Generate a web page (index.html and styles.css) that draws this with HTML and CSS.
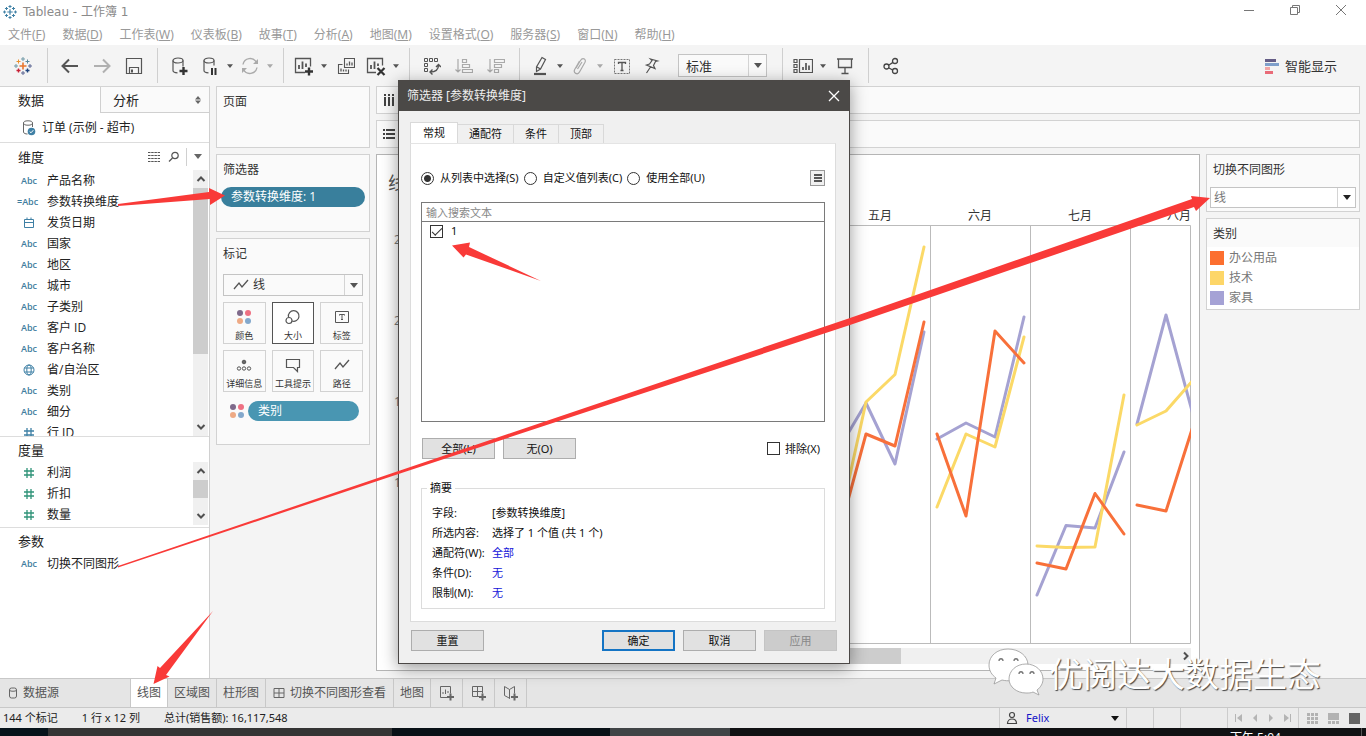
FILE: index.html
```html
<!DOCTYPE html>
<html lang="zh-CN">
<head>
<meta charset="utf-8">
<title>Tableau - 工作簿 1</title>
<link rel="stylesheet" href="styles.css">
</head>
<body>
<svg class="defs" aria-hidden="true">
  <defs>
    <symbol id="caret" viewBox="0 0 8 5"><path d="M0 0h8L4 5z" fill="currentColor"/></symbol>
    <symbol id="hash" viewBox="0 0 12 12"><path d="M4 1v10M8 1v10M1 4h10M1 8h10" stroke="currentColor" stroke-width="1.300" fill="none"/></symbol>
    <symbol id="chev-up" viewBox="0 0 10 8"><path d="M1.500 6 5 2.500 8.500 6" stroke="#505050" stroke-width="2" fill="none"/></symbol>
    <symbol id="chev-down" viewBox="0 0 10 8"><path d="M1.500 2 5 5.500 8.500 2" stroke="#505050" stroke-width="2" fill="none"/></symbol>
    <symbol id="dots" viewBox="0 0 16 16"><circle cx="4" cy="4" r="3" fill="#7f6a8b"/><circle cx="12" cy="4" r="3" fill="#ee7183"/><circle cx="4" cy="12" r="3" fill="#eeaa85"/><circle cx="12" cy="12" r="3" fill="#83a8cc"/></symbol>
    <symbol id="wave" viewBox="0 0 16 12"><path d="M1 10 6 4l3 4 6-7" stroke="#555" stroke-width="1.300" fill="none"/></symbol>
    <symbol id="logo" viewBox="0 0 18 18">
      <path d="M9 5.500v7M5.500 9h7" stroke-width="1.600"/>
      <path d="M9 0v4M7 2h4M9 14v4M7 16h4M2 7v4M0 9h4M16 7v4M14 9h4M4.500 2.500v4M2.500 4.500h4M13.500 2.500v4M11.500 4.500h4M4.500 11.500v4M2.500 13.500h4M13.500 11.500v4M11.500 13.500h4"/>
    </symbol>
  </defs>
</svg>

<header class="titlebar">
  <svg class="app-icon" viewBox="0 0 18 18" stroke="#3f80a5" stroke-width="1.300" fill="none"><use href="#logo"/></svg>
  <h1>Tableau - 工作簿 1</h1>
  <div class="window-buttons">
    <button aria-label="最小化"><svg width="12" height="12"><path d="M1 6.500h10" stroke="#777"/></svg></button>
    <button aria-label="还原"><svg width="12" height="12" fill="none" stroke="#777"><path d="M1.500 3.500h7v7h-7zM3.500 3.500v-2h7v7h-2"/></svg></button>
    <button aria-label="关闭"><svg width="12" height="12"><path d="m1 1 10 10M11 1 1 11" stroke="#777"/></svg></button>
  </div>
</header>

<nav class="menubar">
  <button>文件(<u>F</u>)</button><button>数据(<u>D</u>)</button><button>工作表(<u>W</u>)</button><button>仪表板(<u>B</u>)</button><button>故事(<u>T</u>)</button><button>分析(<u>A</u>)</button><button>地图(<u>M</u>)</button><button>设置格式(<u>O</u>)</button><button>服务器(<u>S</u>)</button><button>窗口(<u>N</u>)</button><button>帮助(<u>H</u>)</button>
</nav>

<div class="toolbar">
  <button class="tool home" aria-label="开始"><svg width="18" height="18" viewBox="0 0 18 18" fill="none"><path d="M9 5.500v7M5.500 9h7" stroke="#e8762d" stroke-width="1.600"/><path d="M9 0v4M7 2h4" stroke="#7199a6"/><path d="M9 14v4M7 16h4" stroke="#5b6591"/><path d="M2 7v4M0 9h4" stroke="#7199a6"/><path d="M16 7v4M14 9h4" stroke="#5b6591"/><path d="M4.500 2.500v4M2.500 4.500h4" stroke="#eb912c"/><path d="M13.500 2.500v4M11.500 4.500h4" stroke="#59879b"/><path d="M4.500 11.500v4M2.500 13.500h4" stroke="#c72035" stroke-width="1.400"/><path d="M13.500 11.500v4M11.500 13.500h4" stroke="#1f447e" stroke-width="1.400"/></svg></button>
  <span class="sep"></span>
  <button class="tool" aria-label="撤消"><svg width="18" height="16" fill="none" stroke="#555" stroke-width="2"><path d="M17 8H2M8 1.500 1.500 8 8 14.500"/></svg></button>
  <button class="tool" aria-label="重做"><svg width="18" height="16" fill="none" stroke="#b0b0b0" stroke-width="2"><path d="M1 8h15M10 1.500 16.500 8 10 14.500"/></svg></button>
  <button class="tool" aria-label="保存"><svg width="18" height="18" fill="none" stroke="#555"><path d="M1.500 1.500h15v15h-15zM4.500 16.500v-6h9v6" stroke-width="1.200"/><path d="M7 12.500v3" stroke-width="2"/></svg></button>
  <span class="sep"></span>
  <button class="tool" aria-label="新建数据源"><svg width="18" height="20" fill="none" stroke="#555" stroke-width="1.200"><ellipse cx="7" cy="4.500" rx="5" ry="2.500"/><path d="M2 4.500v10c0 1.300 2 2.200 4.500 2.300M12 4.500v6"/><path d="M12.500 11v8M8.500 15h8" stroke="#333" stroke-width="2.400"/></svg></button>
  <button class="tool narrow" aria-label="暂停自动更新"><svg width="18" height="20" fill="none" stroke="#555" stroke-width="1.200"><ellipse cx="8" cy="4.500" rx="5" ry="2.500"/><path d="M3 4.500v10c0 1.300 2 2.200 4.500 2.300M13 4.500v5"/><path d="M11 12v7M14.500 12v7" stroke="#333" stroke-width="2"/></svg></button>
  <button class="drop" aria-label="更新选项"><svg><use href="#caret"/></svg></button>
  <button class="tool narrow" aria-label="运行更新"><svg width="18" height="18" fill="none" stroke="#aaa" stroke-width="1.400"><path d="M2 7.500a7.200 7.200 0 0 1 13.500-2M16 10.500a7.200 7.200 0 0 1-13.500 2"/><path d="M17 2v5h-5zM1 16v-5h5z" fill="#aaa" stroke="none"/></svg></button>
  <button class="drop off" aria-label="运行选项"><svg><use href="#caret"/></svg></button>
  <span class="sep"></span>
  <button class="tool narrow" aria-label="新建工作表"><svg width="20" height="20" fill="none" stroke="#555" stroke-width="1.300"><path d="M11 16.500H1.500v-14h15v8"/><path d="M5 13V9M8.500 13V5.500M12 11V7.500" stroke-width="1.800"/><path d="M15 11.500v8M11 15.500h8" stroke="#333" stroke-width="2.400"/></svg></button>
  <button class="drop" aria-label="新建选项"><svg><use href="#caret"/></svg></button>
  <button class="tool" aria-label="复制"><svg width="18" height="18" fill="none" stroke="#555" stroke-width="1.100"><path d="M7.500 1.500h10v9h-10zM5.500 7.500h-4v9h10v-4"/><path d="M10 8.500v-2M12.500 8.500v-4M15 8.500v-3M4 14.500v-3M6.500 14.500v-2M9 14.500v-2" stroke-width="1.300"/></svg></button>
  <button class="tool narrow" aria-label="清除工作表"><svg width="20" height="20" fill="none" stroke="#555" stroke-width="1.300"><path d="M10 16.500H1.500v-14h15v7"/><path d="M5 13V9M8.500 13V5.500M12 10V7.500" stroke-width="1.800"/><path d="m11.500 12 7 7M18.500 12l-7 7" stroke="#333" stroke-width="2.200"/></svg></button>
  <button class="drop" aria-label="清除选项"><svg><use href="#caret"/></svg></button>
  <span class="sep"></span>
  <button class="tool" aria-label="交换行和列"><svg width="18" height="18" fill="none" stroke="#555"><path d="M1.500 1.500h3v3h-3zM6.500 1.500h3v3h-3zM11.500 1.500h3v3h-3zM1.500 6.500h3v3h-3zM1.500 11.500h3v3h-3z"/><path d="M15.500 8c0 5-3 7-8.500 7M13 10l2.500-2.500L18 10M9.500 12.500 7 15l2.500 2.500" stroke-width="1.400"/></svg></button>
  <button class="tool" aria-label="升序排序"><svg width="18" height="16" fill="none" stroke="#aaa" stroke-width="1.200"><path d="M3 1v13M.500 11.500 3 14l2.500-2.500M7.500 1.500h4v3h-4zM7.500 6.500h7v3h-7zM7.500 11.500h10v3h-10z"/></svg></button>
  <button class="tool" aria-label="降序排序"><svg width="18" height="16" fill="none" stroke="#aaa" stroke-width="1.200"><path d="M3 1v13M.500 11.500 3 14l2.500-2.500M7.500 1.500h10v3h-10zM7.500 6.500h7v3h-7zM7.500 11.500h4v3h-4z"/></svg></button>
  <span class="sep"></span>
  <button class="tool narrow" aria-label="突出显示"><svg width="16" height="20" fill="none" stroke="#555" stroke-width="1.200"><path d="m10 1.500 3.500 2-5 9.500-4 2.500V11zM5 11l3.500 2"/><path d="M2 18h12" stroke-width="2.200"/></svg></button>
  <button class="drop" aria-label="突出选项"><svg><use href="#caret"/></svg></button>
  <button class="tool narrow" aria-label="组成员"><svg width="16" height="18" fill="none" stroke="#aaa" stroke-width="1.200"><path d="M4 11 8.500 3.500c2-3.500 6-1.500 4.500 1.800L7.500 15c-2 3.500-6.500 1-4.800-2.500L7.500 4M5.500 12 10 5"/></svg></button>
  <button class="drop off" aria-label="组选项"><svg><use href="#caret"/></svg></button>
  <button class="tool" aria-label="显示标记标签"><svg width="18" height="18"><path d="M1.500 2.500h15v14h-15z" fill="none" stroke="#777" stroke-dasharray="2 1"/><path d="M5.500 7V5.500h7V7M9 5.500v8M7.500 13.500h3" fill="none" stroke="#555" stroke-width="1.300"/></svg></button>
  <button class="tool narrow" aria-label="固定轴"><svg width="16" height="18" fill="none" stroke="#555" stroke-width="1.200"><path d="m6.500 2 7 2-2 .5-2 4 1.500 3L2.500 8l3-1L8 3.500zM6.500 10l-4 6"/></svg></button>
  <span class="combo fit"><select aria-label="适合"><option>标准</option></select><i><svg><use href="#caret"/></svg></i></span>
  <span class="sep"></span>
  <button class="tool narrow" aria-label="显示隐藏卡"><svg width="20" height="16" fill="none" stroke="#555" stroke-width="1.200"><path d="M1 1.500h3v3H1zM1 6.500h3v3H1zM1 11.500h3v3H1zM6.500 1.500h13v13h-13z"/><path d="M10 12V9M13 12V5M16 12V7.500" stroke-width="1.700"/></svg></button>
  <button class="drop" aria-label="卡选项"><svg><use href="#caret"/></svg></button>
  <button class="tool" aria-label="演示模式"><svg width="18" height="18" fill="none" stroke="#555" stroke-width="1.300"><path d="M1 2h16M2.500 2v8.500h13V2M9 10.500V16M5.500 16.500h7"/></svg></button>
  <span class="sep"></span>
  <button class="tool" aria-label="共享"><svg width="16" height="18" fill="none" stroke="#444" stroke-width="1.300"><circle cx="3.500" cy="9.500" r="2.500"/><circle cx="12" cy="4" r="2.500"/><circle cx="12" cy="14" r="2.500"/><path d="m6 8 4-2.600M6 11l3.600 2"/></svg></button>
  <button class="show-me"><svg width="16" height="16"><path d="M1 1h11v3H1z" fill="#655d86"/><path d="M1 5h14v3H1z" fill="#7f9fca"/><path d="M1 9h5v3H1z" fill="#f1a5a5"/><path d="M1 13h8v3H1z" fill="#e96b78"/></svg>智能显示</button>
</div>

<main class="workspace">
  <aside class="data-pane">
    <div class="pane-tabs"><button class="on">数据</button><button>分析<svg width="6" height="8"><path d="M0 3.500h6L3 0zM0 4.500h6L3 8z" fill="#666"/></svg></button></div>
    <button class="source"><svg width="14" height="16" fill="none" stroke="#666"><ellipse cx="6" cy="3" rx="4.500" ry="2.200"/><path d="M1.500 3v9c0 1.400 2 2 4 2M10.500 3v4"/><circle cx="9.500" cy="11.500" r="3.800" fill="#3f80a5" stroke="none"/><path d="m7.700 11.500 1.300 1.300 2.300-2.600" stroke="#fff"/></svg>订单 (示例 - 超市)</button>
    <section class="dims">
      <div class="pane-head"><h2>维度</h2>
        <button aria-label="查看数据"><svg width="12" height="11"><path d="M0 1.500h12M0 4.500h12M0 7.500h12M0 10.500h12" stroke="#555" stroke-dasharray="2.500 .700"/></svg></button>
        <button aria-label="查找"><svg width="12" height="12" fill="none" stroke="#555" stroke-width="1.200"><circle cx="7" cy="4.500" r="3.200"/><path d="M4.500 7 1 10.500"/></svg></button>
        <button class="more" aria-label="更多"><svg width="8" height="5" color="#666"><use href="#caret"/></svg></button>
      </div>
      <div class="list-wrap">
        <ul class="fields">
          <li><b>Abc</b>产品名称</li><li><b class="calc">=Abc</b>参数转换维度</li>
          <li><svg viewBox="0 0 12 12" fill="none" stroke="#3f80a5"><path d="M1.500 2.500h9v8h-9zM1.500 5.500h9M4 .500v2M8 .500v2"/></svg>发货日期</li>
          <li><b>Abc</b>国家</li><li><b>Abc</b>地区</li><li><b>Abc</b>城市</li><li><b>Abc</b>子类别</li><li><b>Abc</b>客户 ID</li><li><b>Abc</b>客户名称</li>
          <li><svg viewBox="0 0 12 12" fill="none" stroke="#3f80a5"><circle cx="6" cy="6" r="5"/><ellipse cx="6" cy="6" rx="2.200" ry="5"/><path d="M1.500 4h9M1.500 8h9"/></svg>省/自治区</li>
          <li><b>Abc</b>类别</li><li><b>Abc</b>细分</li><li><svg class="blue"><use href="#hash"/></svg>行 ID</li>
        </ul>
        <div class="scroll"><svg><use href="#chev-up"/></svg><span class="thumb long"></span><svg><use href="#chev-down"/></svg></div>
      </div>
    </section>
    <section class="measures">
      <div class="pane-head"><h2>度量</h2></div>
      <div class="list-wrap">
        <ul class="fields"><li><svg class="green"><use href="#hash"/></svg>利润</li><li><svg class="green"><use href="#hash"/></svg>折扣</li><li><svg class="green"><use href="#hash"/></svg>数量</li></ul>
        <div class="scroll"><svg><use href="#chev-up"/></svg><span class="thumb short"></span><svg><use href="#chev-down"/></svg></div>
      </div>
    </section>
    <section class="params">
      <div class="pane-head"><h2>参数</h2></div>
      <ul class="fields"><li><b>Abc</b>切换不同图形</li></ul>
    </section>
  </aside>

  <div class="shelves">
    <section class="card pages"><h3>页面</h3></section>
    <section class="card filters"><h3>筛选器</h3><button class="pill dark">参数转换维度: 1</button></section>
    <section class="card marks"><h3>标记</h3>
      <span class="combo mark-type"><svg class="lead"><use href="#wave"/></svg><select aria-label="标记类型"><option>线</option></select><i><svg><use href="#caret"/></svg></i></span>
      <div class="mark-grid">
        <button><svg><use href="#dots"/></svg>颜色</button>
        <button class="on"><svg viewBox="0 0 16 16" fill="none" stroke="#555" stroke-width="1.200"><path d="M7 12a5.300 5.300 0 1 0-3.500-4"/><circle cx="4" cy="11.500" r="3"/></svg>大小</button>
        <button><svg viewBox="0 0 16 16" fill="none" stroke="#555"><path d="M1.500 2.500h13v11h-13z"/><path d="M5.500 6.500v-1h5v1M8 5.500v5M7 10.500h2"/></svg>标签</button>
        <button><svg viewBox="0 0 16 16" fill="none" stroke="#555"><circle cx="8" cy="5" r="1.800" fill="#666"/><circle cx="3" cy="11.500" r="1.700"/><circle cx="8" cy="11.500" r="1.700"/><circle cx="13" cy="11.500" r="1.700"/></svg>详细信息</button>
        <button><svg viewBox="0 0 16 16" fill="none" stroke="#555" stroke-width="1.200"><path d="M1.500 2.500h13v8h-2v4l-4-4h-7z"/></svg>工具提示</button>
        <button><svg viewBox="0 -2 16 16"><use href="#wave" width="16" height="12"/></svg>路径</button>
      </div>
      <div class="mark-row"><svg><use href="#dots"/></svg><button class="pill">类别</button></div>
    </section>
  </div>

  <div class="view">
    <div class="shelf"><svg width="14" height="14"><path d="M3 4v9M7 4v9M11 4v9M3 1v2M7 1v2M11 1v2" stroke="#444" stroke-width="2"/></svg></div>
    <div class="shelf"><svg width="14" height="14"><path d="M4 3h9M4 7h9M4 11h9M1 3h2M1 7h2M1 11h2" stroke="#444" stroke-width="2"/></svg></div>
    <div class="view-main">
      <section class="canvas">
        <h2>线图</h2>
        <div class="chart">
          <div class="axis"><span>2</span><span>2</span><span>1</span><span>1</span></div>
          <svg class="plot" viewBox="430 200 761 444" preserveAspectRatio="xMaxYMin slice">
            <g class="months"><text x="880" y="220">五月</text><text x="980" y="220">六月</text><text x="1080" y="220">七月</text><text x="1179" y="220">八月</text></g>
            <path class="grid" d="M430 225.500h760.500v418H430M830.500 225v418M930.500 225v418M1030.500 225v418M1130.500 225v418"/>
            <g class="purple"><path d="m837 452 29-49 29 61 29-132"/><path d="m937 439 29-16 29 14 29-120"/><path d="m1037 595 29-69.500 29 2.500 29-76"/><path d="m1137 424 29-109 29 107"/></g>
            <g class="yellow"><path d="m837 534 29-132 29-27.500L924 247"/><path d="m937 507 29-73 29 13 29-110"/><path d="m1037 546 29 1.500 29-.5 29-152"/><path d="m1137 425 29-14 29-33"/></g>
            <g class="orange"><path d="m837 541 29-107 29 12 29-124"/><path d="m937 434 29 82 29-185 29 32"/><path d="m1037 563 29 6 29-75.500 29 40.500"/><path d="m1137 505 29 6 29-91"/></g>
          </svg>
        </div>
        <div class="hscroll"><span></span><svg width="8" height="10"><path d="M2 1.500 5.500 5 2 8.500" fill="none" stroke="#505050" stroke-width="2"/></svg></div>
      </section>
      <aside class="legends">
        <section class="card param-card"><h3><label for="shape">切换不同图形</label></h3><span class="combo shape"><select id="shape"><option>线</option></select><i><svg><use href="#caret"/></svg></i></span></section>
        <section class="card legend"><h3>类别</h3><ul><li class="c1">办公用品</li><li class="c2">技术</li><li class="c3">家具</li></ul></section>
      </aside>
    </div>
  </div>
</main>

<nav class="sheet-tabs">
  <button class="ds"><svg width="10" height="12" fill="none" stroke="#666"><rect x="1.500" y="1" width="7" height="10" rx="2"/><path d="M1.500 3.500c1.500 1 5.500 1 7 0"/></svg>数据源</button>
  <button class="on">线图</button><button>区域图</button><button>柱形图</button>
  <button class="board"><svg width="12" height="12" fill="none" stroke="#666"><path d="M1 1.500h10v9H1zM6 1.500v9M1 6h10"/></svg>切换不同图形查看</button><button>地图</button>
  <button class="new" aria-label="新建工作表"><svg width="16" height="16" fill="none" stroke="#666"><path d="M8 12.500H1.500v-11h10v7M4 9V7M6.500 9V4.500M9 8V6"/><path d="M11.500 8.500v7M8 12h7" stroke-width="2"/></svg></button>
  <button class="new" aria-label="新建仪表板"><svg width="16" height="16" fill="none" stroke="#666"><path d="M8 11.500H1.500v-10h10v7M6.500 1.500v10M1.500 6.500h10"/><path d="M11.500 8.500v7M8 12h7" stroke-width="2"/></svg></button>
  <button class="new" aria-label="新建故事"><svg width="16" height="16" fill="none" stroke="#666"><path d="M7 13.500 1.500 10.500v-9l5 3 5-3v7M6.500 4.500v9"/><path d="M11.500 8.500v7M8 12h7" stroke-width="2"/></svg></button>
</nav>

<footer class="status">
  <p><span>144 个标记</span><span>1 行 x 12 列</span><span>总计(销售额): 16,117,548</span></p>
  <button class="user"><svg width="12" height="14" fill="none" stroke="#444" stroke-width="1.200"><circle cx="6" cy="4" r="2.500"/><path d="M1.500 12.500c0-6 9-6 9 0z"/></svg><span>Felix</span><svg width="8" height="5"><use href="#caret"/></svg></button>
  <i class="slot"></i><i class="slot"></i><i class="slot wide"></i>
  <div class="pager">
    <button aria-label="第一个"><svg width="8" height="8" fill="#b4b4b4"><path d="M0 0h1v8H0zM7 0v8L2 4z"/></svg></button><button aria-label="上一个"><svg width="8" height="8" fill="#b4b4b4"><path d="M6 0v8L2 4z"/></svg></button><button aria-label="下一个"><svg width="8" height="8" fill="#b4b4b4"><path d="M2 0v8l4-4z"/></svg></button><button aria-label="最后一个"><svg width="8" height="8" fill="#b4b4b4"><path d="M7 0h1v8H7zM1 0v8l5-4z"/></svg></button>
  </div>
  <div class="modes">
    <button aria-label="缩略图"><svg width="11" height="11" fill="#b2b2b2"><path d="M0 0h3v3H0zM4 0h3v3H4zM8 0h3v3H8zM0 4h3v3H0zM4 4h3v3H4zM8 4h3v3H8zM0 8h3v3H0zM4 8h3v3H4zM8 8h3v3H8z"/></svg></button>
    <button aria-label="胶片"><svg width="11" height="11" fill="#b2b2b2"><path d="M0 0h11v7H0zM0 8h3v3H0zM4 8h3v3H4zM8 8h3v3H8z"/></svg></button>
    <button aria-label="工作表"><svg width="11" height="11" fill="#646464"><path d="M0 0h11v11H0z"/></svg></button>
  </div>
</footer>

<div class="taskbar"><span class="t1"></span><span class="t2"></span><span class="t3"></span><span class="t4"></span><time>下午 5:04</time></div>

<div class="dialog" role="dialog" aria-label="筛选器">
  <header><h2>筛选器 [参数转换维度]</h2><button aria-label="关闭"><svg width="12" height="12"><path d="m1 1 10 10M11 1 1 11" stroke="#fff" stroke-width="1.300"/></svg></button></header>
  <div class="dialog-body">
    <div class="dtabs"><button class="on">常规</button><button>通配符</button><button>条件</button><button>顶部</button></div>
    <div class="dpage">
      <div class="radios">
        <label><input type="radio" name="mode" checked>从列表中选择(S)</label><label><input type="radio" name="mode">自定义值列表(C)</label><label><input type="radio" name="mode">使用全部(U)</label>
        <button class="burger" aria-label="选项"><svg width="8" height="8"><path d="M0 1h8M0 4h8M0 7h8" stroke="#555" stroke-width="2"/></svg></button>
      </div>
      <input class="search" type="text" placeholder="输入搜索文本" aria-label="搜索">
      <div class="values"><label><input type="checkbox" checked>1</label></div>
      <div class="list-actions"><button class="btn">全部(L)</button><button class="btn">无(O)</button><label><input type="checkbox">排除(X)</label></div>
      <fieldset><legend>摘要</legend>
        <dl><dt>字段:</dt><dd>[参数转换维度]</dd><dt>所选内容:</dt><dd>选择了 1 个值 (共 1 个)</dd><dt>通配符(W):</dt><dd><a href="#">全部</a></dd><dt>条件(D):</dt><dd><a href="#">无</a></dd><dt>限制(M):</dt><dd><a href="#">无</a></dd></dl>
      </fieldset>
    </div>
    <div class="dfoot"><button class="btn">重置</button><button class="btn primary">确定</button><button class="btn">取消</button><button class="btn" disabled>应用</button></div>
  </div>
</div>

<svg class="arrows" aria-hidden="true">
  <path d="m118 204 91-12v-4l16 7.500-15 9.500v-6l-92 7z"/>
  <path d="m118 566 282-95.500L850 318l342-119-1-3 19 2-14 13-2-4L850 325 400 473.500 118 567.500z"/>
  <path d="m452 245.500 18-3-1 4.500 72 34-75-26.500-2.500 3z"/>
  <path d="m153.500 684 4-18 2.500 2 53-57-47 64 3.500 1.500z"/>
</svg>

<div class="watermark">
  <svg width="56" height="50" viewBox="0 0 56 50"><g fill="#fff" stroke="#999" stroke-width=".800"><path d="M20 1C9 1 1 8 1 17c0 6 3 10 7 13l-2 6 8-4c12 3 26-3 26-15C40 8 31 1 20 1z"/><path d="M38 16c-10 0-17 7-17 15s8 14 17 14c3 0 5 0 7-1l6 3-2-5c4-3 6-7 6-11 0-8-7-15-17-15z"/></g><g fill="none" stroke="#777" stroke-width="1.300"><path d="M11 13c0-3 4-3 4 0M26 13c0-3 4-3 4 0M31 26c0-3 4-3 4 0M42 26c0-3 4-3 4 0"/></g></svg>
  <span>优阅达大数据生态</span>
</div>
</body>
</html>
```
FILE: styles.css
```css
* { box-sizing: border-box; }
body { margin: 0; height: 100vh; position: relative; overflow: hidden; display: flex; flex-direction: column; background: #f4f4f4; color: #333; font: 12px/16px "Open Sans", "Noto Sans CJK SC", sans-serif; }
button, input, select { font: inherit; color: inherit; margin: 0; }
button { border: 0; background: none; padding: 0; display: flex; align-items: center; justify-content: center; white-space: nowrap; }
h1, h2, h3, p, ul, dl, dd { margin: 0; padding: 0; font-weight: 400; }
ul { list-style: none; }
svg { flex: none; }
.defs { position: absolute; width: 0; height: 0; }

.titlebar { flex: none; height: 24px; display: flex; align-items: center; background: #fff; color: #8a8a8a; padding-left: 3px; }
.titlebar h1 { flex: 1; font: 12px/20px "DejaVu Sans", "Noto Sans CJK SC", sans-serif; }
.app-icon { width: 14px; height: 14px; margin-right: 6px; }
.window-buttons { display: flex; align-self: flex-start; padding-right: 2px; }
.window-buttons button { width: 46px; height: 20px; }

.menubar { flex: none; height: 21px; display: flex; gap: 17px; padding-left: 8px; background: #fff; color: #999; font-family: "Noto Sans", "Noto Sans CJK SC", sans-serif; }

.toolbar { flex: none; height: 41px; display: flex; align-items: center; }
.tool { width: 32px; height: 30px; }
.tool.narrow { width: 28px; }
.tool.home { width: 34px; margin-left: 6px; }
.drop { width: 12px; height: 30px; color: #555; }
.drop svg { width: 6px; height: 4px; }
.drop.off { color: #aaa; }
.sep { width: 1px; height: 35px; margin: 0 6px 0 7px; background: #cfcfcf; }
.show-me { margin-left: auto; margin-right: 29px; gap: 5px; font-size: 13px; }

.combo { position: relative; display: flex; border: 1px solid #c4c4c4; background: #fafafa; }
.combo select { appearance: none; border: 0; background: none; width: 100%; padding: 0 4px; outline: 0; }
.combo i { position: absolute; right: 0; top: 0; bottom: 0; width: 18px; border-left: 1px solid #d4d4d4; display: flex; align-items: center; justify-content: center; pointer-events: none; color: #555; }
.combo i svg { width: 8px; height: 5px; }
.combo.fit { width: 89px; height: 23px; margin: 0 8px 0 12px; font-size: 13px; }
.combo.fit select { padding-left: 7px; }

.workspace { flex: 1; min-height: 0; display: flex; gap: 6px; padding-right: 6px; }
.data-pane { width: 210px; flex: none; background: #fff; border-right: 1px solid #d0d0d0; color: #222; }
.pane-tabs { display: flex; height: 27px; font-size: 13px; border-top: 1px solid #d4d4d4; }
.pane-tabs button { width: 100px; justify-content: flex-start; padding-left: 18px; }
.pane-tabs button + button { flex: 1; justify-content: space-between; padding: 0 8px 0 12px; background: #fafafa; border-left: 1px solid #d0d0d0; border-bottom: 1px solid #d0d0d0; }
.source { width: 100%; height: 30px; padding-left: 22px; gap: 6px; justify-content: flex-start; border-bottom: 1px solid #ddd; }
.pane-head { display: flex; align-items: center; height: 27px; padding-left: 18px; }
.pane-head h2 { font-size: 13px; flex: 1; }
.pane-head button { width: 20px; height: 18px; }
.pane-head .more { border-left: 1px solid #d0d0d0; width: 23px; margin-left: 2px; }
.dims { border-bottom: 1px solid #ddd; }
.measures { border-bottom: 1px solid #ddd; padding-bottom: 2px; }
.measures .pane-head { height: 25px; }
.list-wrap { display: flex; padding-right: 1px; }
.dims .list-wrap { height: 266px; }
.fields { flex: 1; overflow: hidden; }
.fields li { display: flex; align-items: center; height: 21px; padding-left: 18px; }
.fields b { width: 29px; padding-left: 3px; flex: none; color: #3f7d9e; font: 600 9px/12px "Open Sans", sans-serif; }
.fields b.calc { padding-left: 0; margin-left: -1px; width: 30px; }
.fields li svg { width: 12px; height: 12px; margin: 0 12px 0 5px; }
.fields .blue { color: #3f80a5; }
.fields .green { color: #2f9378; }
.scroll { width: 15px; background: #f0f0f0; display: flex; flex-direction: column; align-items: center; }
.scroll svg { width: 10px; height: 8px; margin: 5px 0; }
.thumb { width: 15px; background: #cdcdcd; margin-bottom: auto; }
.thumb.long { height: 166px; }
.thumb.short { height: 18px; }
.params .pane-head { height: 25px; }

.shelves { width: 154px; flex: none; display: flex; flex-direction: column; gap: 6px; }
.card { border: 1px solid #d2d2d2; background: #fafafa; }
.card h3 { font-size: 12px; height: 28px; line-height: 30px; padding-left: 6px; }
.pages { height: 62px; }
.filters { height: 78px; padding: 0 4px; }
.filters h3 { padding-left: 2px; }
.pill { height: 20px; border-radius: 10px; background: #4996b2; color: #fff; justify-content: flex-start; padding: 0 10px; }
.pill.dark { width: 100%; background: #397f9c; margin-top: 4px; }
.marks { height: 207px; padding: 0 6px; }
.marks h3 { padding-left: 0; }
.mark-type { height: 22px; margin-top: 7px; }
.mark-type .lead { position: absolute; left: 9px; top: 4px; width: 16px; height: 12px; }
.mark-type select { padding-left: 29px; }
.mark-grid { display: grid; grid-template-columns: repeat(3, 1fr); gap: 6px; margin-top: 6px; }
.mark-grid button { height: 42px; flex-direction: column; gap: 5px; padding-top: 5px; border: 1px solid #d2d2d2; font-size: 9px; line-height: 12px; }
.mark-grid button.on { border-color: #555; background: #fff; }
.mark-grid svg, .mark-row svg { width: 16px; height: 16px; }
.mark-row { display: flex; align-items: center; gap: 3px; margin-top: 9px; padding: 0 4px 0 6px; }
.mark-row .pill { flex: 1; }

.view { flex: 1; min-width: 0; display: flex; flex-direction: column; gap: 6px; }
.shelf { height: 28px; flex: none; border: 1px solid #d2d2d2; background: #fafafa; padding: 6px 5px; }
.view-main { flex: 1; min-height: 0; display: flex; gap: 6px; padding-bottom: 7px; }
.canvas { flex: 1; min-width: 0; background: #fff; border: 1px solid #b5b5b5; padding-right: 8px; display: flex; flex-direction: column; }
.canvas h2 { height: 45px; padding: 16px 0 0 11px; font-size: 18px; line-height: 24px; color: #555; }
.chart { display: flex; height: 444px; }
.axis { width: 53px; flex: none; padding: 30px 0 0 17px; display: flex; flex-direction: column; gap: 61px; line-height: 20px; color: #777; }
.plot { flex: 1; min-width: 0; height: 444px; }
.months { font-size: 12px; fill: #333; text-anchor: middle; }
.grid { fill: none; stroke: #bbb; }
.purple, .yellow, .orange { fill: none; stroke-width: 3; stroke-linecap: round; stroke-linejoin: round; }
.purple { stroke: #a5a2d2; }
.yellow { stroke: #fbd967; }
.orange { stroke: #f8703a; }
.hscroll { height: 16px; margin: 4px 0 0 53px; background: #f0f0f0; display: flex; align-items: center; justify-content: space-between; padding-right: 1px; }
.hscroll span { width: 62%; height: 16px; background: #cdcdcd; }
.legends { width: 154px; flex: none; display: flex; flex-direction: column; gap: 6px; }
.param-card { height: 58px; padding: 0 3px; }
.param-card h3 { padding-left: 3px; }
.combo.shape { height: 21px; margin-top: 4px; background: #fff; color: #777; }
.combo.shape select { padding-left: 3px; }
.combo.shape i { color: #222; }
.legend ul { background: #fff; padding: 1px 0 1px 3px; }
.legend li { display: flex; align-items: center; gap: 5px; height: 20px; color: #777; }
.legend li::before { content: ""; width: 14px; height: 14px; }
.c1::before { background: #fc6f2f; }
.c2::before { background: #fdd668; }
.c3::before { background: #a5a2d5; }

.sheet-tabs { flex: none; display: flex; height: 30px; background: #e5e5e5; border-top: 1px solid #c8c8c8; border-bottom: 1px solid #c8c8c8; color: #555; }
.sheet-tabs button { padding: 0 6px; gap: 5px; border-right: 1px solid #c8c8c8; }
.sheet-tabs .ds { width: 131px; justify-content: flex-start; padding-left: 8px; }
.sheet-tabs .on { background: #fff; }
.sheet-tabs .board { padding: 0 7px; }
.sheet-tabs .new { width: 32px; }

.status { flex: none; height: 20px; display: flex; background: #ebebeb; color: #222; font: 11px/16px "Noto Sans", "Noto Sans CJK SC", sans-serif; }
.status p { flex: 1; display: flex; align-items: center; gap: 24px; padding-left: 3px; }
.status .user { width: 128px; padding: 0 7px 0 6px; gap: 8px; border: solid #ccc; border-width: 0 1px; color: #111; }
.user span { flex: 1; text-align: left; color: #1414c8; }
.slot { width: 27px; border-right: 1px solid #ccc; }
.slot.wide { width: 47px; }
.pager { width: 71px; display: flex; justify-content: space-between; padding: 0 7px; border-right: 1px solid #ccc; }
.modes { width: 67px; display: flex; justify-content: space-between; padding: 0 6px 0 8px; }

.taskbar { flex: none; height: 8px; overflow: hidden; display: flex; background: #101113; color: #fff; }
.t1 { width: 48px; background: #06121a; }
.t2 { width: 344px; background: #343434; }
.t3 { width: 218px; background: #081016; }
.t4 { width: 120px; background: #404446; }
.taskbar time { margin-left: auto; width: 132px; border-right: 1px solid #555; margin-right: 4px; height: 20px; line-height: 20px; }

.dialog { position: absolute; left: 398px; top: 80px; width: 452px; border: 1px solid #4b4846; background: #f0f0f0; color: #111; font: 11px/16px "Noto Sans", "Noto Sans CJK SC", sans-serif; box-shadow: 0 4px 16px rgba(0,0,0,.4); }
.dialog header { height: 30px; display: flex; align-items: center; justify-content: space-between; background: #4b4947; color: #eee; padding: 0 9px 0 8px; }
.dialog header h2 { font-size: 12px; }
.dialog-body { padding: 11px 12px 12px 11px; }
.dtabs { display: flex; align-items: flex-end; height: 21px; }
.dtabs button { height: 19px; padding: 0 11px; border: 1px solid #d9d9d9; border-left: 0; border-bottom: 0; }
.dtabs .on { height: 21px; padding: 0 12px; background: #fff; border-left: 1px solid #d9d9d9; }
.dpage { margin-right: 1px; background: #fff; border: 1px solid #dcdcdc; border-top-color: #e4e4e4; padding: 25px 10px 12px; }
.radios { display: flex; align-items: center; gap: 5px; height: 18px; }
.dialog label { display: flex; align-items: center; gap: 6px; }
.dialog input[type=radio], .dialog input[type=checkbox] { appearance: none; width: 13px; height: 13px; flex: none; border: 1px solid #333; background: #fff; }
.dialog input[type=radio] { border-radius: 50%; }
.dialog input[type=radio]:checked { background: radial-gradient(circle, #333 0 3px, #fff 4px); }
.dialog input[type=checkbox]:checked::before { content: ""; display: block; width: 9px; height: 4px; margin: 2px 1px; border: solid #333; border-width: 0 0 1px 1px; transform: rotate(-45deg); }
.burger { margin-left: auto; width: 15px; height: 16px; border: 1px solid #999; background: #f0f0f0; }
.search { display: block; width: 100%; height: 20px; margin-top: 15px; padding: 0 4px; border: 1px solid #7a7a7a; outline: 0; background: #fff; }
.search::placeholder { color: #888; opacity: 1; }
.values { height: 200px; border: 1px solid #7a7a7a; border-top: 0; padding: 1px 8px; }
.values label { gap: 8px; }
.btn { width: 73px; height: 21px; background: #e1e1e1; border: 1px solid #adadad; }
.btn.primary { border: 2px solid #1474c4; }
.btn:disabled { background: #ccc; border-color: #c4c4c4; color: #888; }
.list-actions { display: flex; gap: 8px; margin-top: 16px; padding-left: 1px; }
.list-actions label { margin-left: auto; padding-right: 5px; gap: 5px; }
fieldset { margin: 21px 0 0; padding: 7px 10px 5px; border: 1px solid #dcdcdc; }
legend { padding: 0 3px; margin-left: -5px; line-height: 16px; }
dl { display: grid; grid-template-columns: 60px 1fr; line-height: 20px; }
a { color: #1414d8; text-decoration: none; }
.dfoot { display: flex; gap: 8px; margin-top: 8px; padding-left: 1px; }
.dfoot .btn:first-child { margin-right: auto; }

.arrows { position: absolute; left: 0; top: 0; width: 100%; height: 100%; fill: #f93a38; pointer-events: none; }
.watermark { position: absolute; right: 45px; bottom: 38px; display: flex; align-items: center; gap: 5px; color: #fff; font: 34px/48px "Noto Sans CJK SC", sans-serif; text-shadow: 1px 1px 1px #444; pointer-events: none; }
```
